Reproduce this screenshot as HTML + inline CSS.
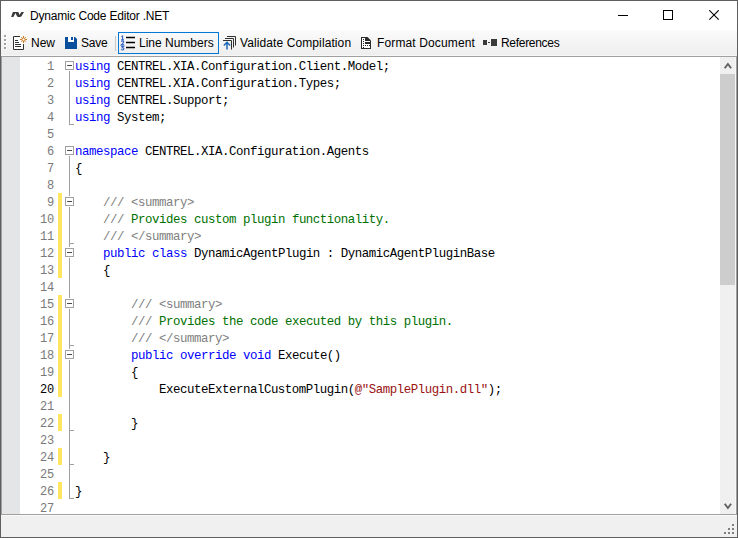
<!DOCTYPE html>
<html><head><meta charset="utf-8">
<style>
*{margin:0;padding:0;box-sizing:border-box}
html,body{width:738px;height:538px;overflow:hidden;background:#fff}
body{position:relative;font-family:"Liberation Sans",sans-serif;font-size:12px;color:#000}
.a{position:absolute}
#win{left:0;top:0;width:738px;height:538px;border:1px solid #5f5f5f;background:#fff}
#tb{left:1px;top:30px;width:736px;height:26px;background:linear-gradient(#fbfbfb,#eeeeee)}
#tbline{left:1px;top:56px;width:735px;height:1px;background:#a0a0a0}
#tbhl{left:1px;top:55px;width:735px;height:1px;background:#f7f7f7}
#ed{left:1px;top:56px;width:736px;height:459px;border:1px solid #a0a0a0;background:#fff}
#gm{left:2px;top:57px;width:18px;height:457px;background:#e4e5e7}
#st{left:1px;top:515px;width:736px;height:22px;background:#f0f0f0}
.t{position:absolute;white-space:pre;font-size:12px;line-height:14px}
.code{position:absolute;left:75px;top:59px;font-family:"Liberation Mono",monospace;font-size:12.4px;letter-spacing:-0.44px;line-height:17px;white-space:pre;color:#000}
.ln{position:absolute;left:20px;width:34px;top:59px;font-family:"Liberation Mono",monospace;font-size:12px;letter-spacing:-0.2px;line-height:17px;white-space:pre;color:#7a7a7a;text-align:right}
.k{color:#0000ff}.c{color:#808080}.g{color:#007000}.s{color:#9a1212}
.yb{position:absolute;left:58px;width:4px;background:#fee660}
.fb{position:absolute;left:65px;width:9px;height:9px;border:1px solid #a0a0a0;background:#fff;box-shadow:0 -1px 0 #fff,0 1px 0 #fff}
.fb:after{content:"";position:absolute;left:1px;top:3px;width:5px;height:1px;background:#4a4a4a}
.fl{position:absolute;left:69px;width:1px;background:#a0a0a0}
.ft{position:absolute;left:69px;width:5px;height:1px;background:#a0a0a0}
</style></head><body>
<div id="win" class="a"></div>
<!-- title -->
<svg class="a" style="left:8px;top:8px" width="20" height="12" viewBox="8 8 20 12">
<path d="M11.1 16.9L12.9 12.1L17.9 12.1Q18.5 12.2 18.8 13L19.7 14.9L20.9 12.6Q21.2 12.1 21.8 12.1L24 12.1L21.6 15.9Q21 16.9 20 16.9L17.9 16.9Q17.2 16.9 16.9 16.1L15.5 13.1L13.4 16.9Z" fill="#3a3a3a"/>
</svg>
<div class="t" style="left:30px;top:9px;letter-spacing:-0.2px">Dynamic Code Editor .NET</div>
<div class="a" style="left:618px;top:15px;width:10px;height:1px;background:#000"></div>
<div class="a" style="left:663px;top:10px;width:10px;height:10px;border:1px solid #000"></div>
<svg class="a" style="left:709px;top:10px" width="11" height="11" viewBox="0 0 11 11"><path d="M0.3 0.3L9.7 9.7M9.7 0.3L0.3 9.7" stroke="#000" stroke-width="1.1"/></svg>

<!-- toolbar -->
<div id="tb" class="a"></div>
<div id="tbhl" class="a"></div>
<div class="a" style="left:4px;top:35px;width:2px;height:2px;background:#a0a0a0;box-shadow:1px 1px 0 #fff"></div>
<div class="a" style="left:4px;top:39px;width:2px;height:2px;background:#a0a0a0;box-shadow:1px 1px 0 #fff"></div>
<div class="a" style="left:4px;top:43px;width:2px;height:2px;background:#a0a0a0;box-shadow:1px 1px 0 #fff"></div>
<div class="a" style="left:4px;top:47px;width:2px;height:2px;background:#a0a0a0;box-shadow:1px 1px 0 #fff"></div>

<!-- New icon -->
<svg class="a" style="left:12px;top:35px" width="17" height="16" viewBox="0 0 17 16">
<path d="M8 1.5H1.5V14.5H11.5V9" fill="#fff" stroke="#303030" stroke-width="1"/>
<path d="M3 5.5H6M3 7.5H7M3 9.5H9M3 11.5H9" stroke="#303030" stroke-width="1"/>
<g stroke="#cf7d1f" stroke-width="1"><path d="M11.5 1V8M8 4.5H15M9.3 2.3L13.7 6.7M13.7 2.3L9.3 6.7"/></g>
<circle cx="11.5" cy="4.5" r="1.6" fill="#fff" stroke="#cf7d1f" stroke-width="1"/>
</svg>
<div class="t" style="left:31px;top:36px">New</div>

<!-- Save icon -->
<svg class="a" style="left:65px;top:37px" width="12" height="12" viewBox="0 0 12 12">
<path d="M0 0H10L12 2V12H0Z" fill="#0a4f9d"/>
<rect x="3" y="0" width="6" height="5" fill="#fff"/>
<rect x="6" y="0" width="2" height="3" fill="#0a4f9d"/>
</svg>
<div class="t" style="left:81px;top:36px;letter-spacing:-0.2px">Save</div>
<div class="a" style="left:115px;top:36px;width:1px;height:15px;background:#c8c8c8"></div>

<!-- Line numbers button -->
<div class="a" style="left:118px;top:32px;width:101px;height:22px;border:1px solid #0078d7"></div>
<svg class="a" style="left:120px;top:35px" width="16" height="16" viewBox="120 35 16 16">
<g fill="none" stroke="#3563c4" stroke-width="1.1">
<path d="M121.3 36.9L122.6 36.1V39.8M121.2 39.9H124"/>
<path d="M121.2 41.6Q121.8 41 122.6 41Q123.8 41.1 123.7 42.2Q123.5 42.9 121.2 44.9H124.1"/>
<path d="M121.2 46.4H123.7L122.3 47.7Q124 47.7 124 48.8Q123.9 50 122.5 50Q121.6 50 121.1 49.4"/>
</g>
<path d="M126 37.5H135M126 42.5H135M126 47.5H135" stroke="#000" stroke-width="1.3"/>
</svg>
<div class="t" style="left:139px;top:36px">Line Numbers</div>

<!-- Validate icon -->
<svg class="a" style="left:222px;top:35px" width="16" height="16" viewBox="0 0 16 16">
<path d="M5 1.5H13.5V10.5M3 3.5H11.5V12.5M1 5.5H9.5V14.5" fill="none" stroke="#303030" stroke-width="1"/>
<path d="M5 14.5V8M1.8 10.5L5 7.3L8.2 10.5" fill="none" stroke="#1c67b8" stroke-width="1.5"/>
</svg>
<div class="t" style="left:240px;top:36px;letter-spacing:0.1px">Validate Compilation</div>

<!-- Format icon -->
<svg class="a" style="left:361px;top:37px" width="10" height="12" viewBox="0 0 10 12">
<path d="M0 0H6.5L10 3.5V12H0Z" fill="#2a2a2a"/>
<g fill="#fff"><rect x="1" y="1" width="3" height="10"/><rect x="4" y="4" width="5" height="1"/><rect x="4" y="7" width="5" height="4"/></g>
<g fill="#2a2a2a"><rect x="2" y="2" width="1" height="1"/><rect x="2" y="4" width="1" height="1"/><rect x="2" y="6" width="1" height="1"/><rect x="2" y="8" width="1" height="1"/><rect x="4" y="8" width="1" height="1"/><rect x="6" y="8" width="1" height="1"/><rect x="8" y="8" width="1" height="1"/><rect x="2" y="10" width="1" height="1"/></g>
</svg>
<div class="t" style="left:377px;top:36px;letter-spacing:0.13px">Format Document</div>

<!-- References icon -->
<div class="a" style="left:483px;top:40px;width:4px;height:5px;background:#3a3a3a"></div>
<div class="a" style="left:488px;top:42px;width:2px;height:1px;background:#3a3a3a"></div>
<div class="a" style="left:491px;top:39px;width:6px;height:7px;background:#3a3a3a"></div>
<div class="t" style="left:501px;top:36px;letter-spacing:-0.3px">References</div>

<!-- editor -->
<div id="ed" class="a"></div>
<div id="gm" class="a"></div>

<div class="ln"> 1
 2
 3
 4
 5
 6
 7
 8
 9
10
11
12
13
14
15
16
17
18
19
<span style="color:#000">20</span>
21
22
23
24
25
26
27</div>

<div class="yb" style="top:193px;height:85px"></div>
<div class="yb" style="top:295px;height:102px"></div>
<div class="yb" style="top:414px;height:17px"></div>
<div class="yb" style="top:448px;height:17px"></div>
<div class="yb" style="top:482px;height:17px"></div>

<!-- fold lines -->
<div class="fl" style="top:71px;height:54px"></div>
<div class="ft" style="top:124px"></div>
<div class="fl" style="top:156px;height:343px"></div>
<div class="ft" style="top:243px"></div>
<div class="ft" style="top:345px"></div>
<div class="ft" style="top:430px"></div>
<div class="ft" style="top:464px"></div>
<div class="ft" style="top:498px"></div>
<div class="fb" style="top:61px"></div>
<div class="fb" style="top:146px"></div>
<div class="fb" style="top:197px"></div>
<div class="fb" style="top:248px"></div>
<div class="fb" style="top:299px"></div>
<div class="fb" style="top:350px"></div>

<div class="code"><span class="k">using</span> CENTREL.XIA.Configuration.Client.Model;
<span class="k">using</span> CENTREL.XIA.Configuration.Types;
<span class="k">using</span> CENTREL.Support;
<span class="k">using</span> System;

<span class="k">namespace</span> CENTREL.XIA.Configuration.Agents
{

    <span class="c">/// &lt;summary&gt;</span>
    <span class="c">///</span> <span class="g">Provides custom plugin functionality.</span>
    <span class="c">/// &lt;/summary&gt;</span>
    <span class="k">public</span> <span class="k">class</span> DynamicAgentPlugin : DynamicAgentPluginBase
    {

        <span class="c">/// &lt;summary&gt;</span>
        <span class="c">///</span> <span class="g">Provides the code executed by this plugin.</span>
        <span class="c">/// &lt;/summary&gt;</span>
        <span class="k">public</span> <span class="k">override</span> <span class="k">void</span> Execute()
        {
            ExecuteExternalCustomPlugin(<span class="s">@"SamplePlugin.dll"</span>);

        }

    }

}
</div>

<!-- scrollbar -->
<div class="a" style="left:720px;top:57px;width:16px;height:457px;background:#f0f0f0"></div>
<div class="a" style="left:735px;top:57px;width:1px;height:457px;background:#f7f7f7"></div>
<div class="a" style="left:720px;top:74px;width:15px;height:211px;background:#cdcdcd"></div>
<svg class="a" style="left:720px;top:57px" width="16" height="16" viewBox="720 57 16 16"><path d="M724.7 68.3L727.9 64L731.1 68.3" fill="none" stroke="#606060" stroke-width="1.9"/></svg>
<svg class="a" style="left:720px;top:497px" width="16" height="16" viewBox="720 497 16 16"><path d="M724.7 503.7L727.9 508L731.1 503.7" fill="none" stroke="#606060" stroke-width="1.9"/></svg>

<!-- status -->
<div class="a" style="left:1px;top:514px;width:736px;height:1px;background:#a0a0a0"></div>
<div id="st" class="a"></div>
<div class="a" style="left:1px;top:515px;width:736px;height:1px;background:#fafafa"></div>
<div class="a" style="left:732px;top:524px;width:2px;height:2px;background:#808080"></div>
<div class="a" style="left:728px;top:528px;width:2px;height:2px;background:#808080"></div>
<div class="a" style="left:732px;top:528px;width:2px;height:2px;background:#808080"></div>
<div class="a" style="left:724px;top:532px;width:2px;height:2px;background:#808080"></div>
<div class="a" style="left:728px;top:532px;width:2px;height:2px;background:#808080"></div>
<div class="a" style="left:732px;top:532px;width:2px;height:2px;background:#808080"></div>
<div class="a" style="left:0;top:537px;width:738px;height:1px;background:#5f5f5f"></div>
<div class="a" style="left:737px;top:0;width:1px;height:538px;background:#5f5f5f"></div>
<div class="a" style="left:0;top:0;width:1px;height:538px;background:#5f5f5f"></div>
</body></html>
